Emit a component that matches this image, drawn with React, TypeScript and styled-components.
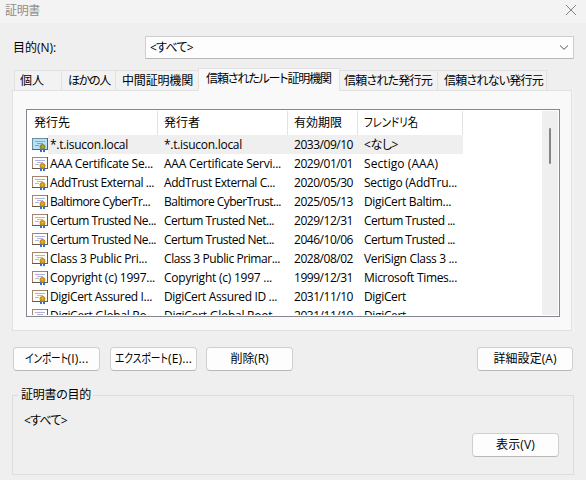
import React, { useLayoutEffect, useRef } from "react";
import styled, { createGlobalStyle } from "styled-components";

const Global = createGlobalStyle`
  * { box-sizing: border-box; }
  body { margin: 0; background: #efefef; overflow: hidden; }
`;

const Dialog = styled.main`
  width: 586px;
  height: 480px;
  overflow: hidden;
  background: #efefef;
  color: #000;
  font: 12px/18px "Open Sans", "Noto Sans CJK JP", sans-serif;
  font-feature-settings: "palt";
  white-space: nowrap;
`;

const TitleBar = styled.header`
  height: 23px;
  padding: 2px 10px 0 5px;
  display: flex;
  justify-content: space-between;
  background: #f3f3f3;
  color: #8d8d8d;
`;

const CloseIcon = styled.svg`
  width: 10px;
  height: 10px;
  margin-top: 3px;
`;

const PurposeRow = styled.section`
  display: flex;
  align-items: center;
  margin: 13px 12px 0 13px;
  height: 23px;
`;

const PurposeLabel = styled.label`
  width: 132px;
`;

const Combo = styled.div`
  display: flex;
  align-items: center;
  justify-content: space-between;
  width: 429px;
  height: 23px;
  padding: 0 5px 0 4px;
  background: #fdfdfd;
  border: 1px solid #cecece;
  border-bottom-color: #b8b8b8;
  border-radius: 1px;
`;

const Tabs = styled.nav`
  display: flex;
  align-items: flex-end;
  height: 23px;
  margin: 9px 0 -1px 14px;
`;

const Tab = styled.div<{ $width: number; $inset: number; $active?: boolean }>`
  position: relative;
  z-index: ${(p) => (p.$active ? 2 : 0)};
  flex: none;
  width: ${(p) => p.$width}px;
  height: ${(p) => (p.$active ? 23 : 21)}px;
  padding: 1px 0 0 ${(p) => p.$inset}px;
  background: ${(p) => (p.$active ? "#f9f9f9" : "#f2f2f2")};
  border: 1px solid #e1e1e1;
  border-bottom-color: ${(p) => (p.$active ? "#f9f9f9" : "#e1e1e1")};
  margin-right: -1px;
`;

const Panel = styled.section`
  width: 560px;
  height: 241px;
  margin-left: 12px;
  padding: 18px 11px 0 13px;
  background: #f9f9f9;
  border: 1px solid #e1e1e1;
  box-shadow: 2px 0 0 #f3f3f3;
`;

const ListBox = styled.div`
  display: flex;
  justify-content: space-between;
  width: 534px;
  height: 208px;
  padding: 1px;
  overflow: hidden;
  background: #fff;
  border: 1px solid #828790;
`;

const Table = styled.div`
  width: 435px;
  height: 204px;
  overflow: hidden;
`;

const TableHeader = styled.div`
  display: grid;
  grid-template-columns: 130px 130px 70px 105px;
  height: 24px;
`;

const HeaderCell = styled.div`
  padding: 3px 0 0 6px;
  border-right: 1px solid #e3e3e3;
`;

const Row = styled.div<{ $selected?: boolean }>`
  display: grid;
  grid-template-columns: 22px 114px 130px 70px 99px;
  justify-items: start;
  height: 19px;
  line-height: 20px;
  background: ${(p) => (p.$selected ? "linear-gradient(90deg, #fff 20px, #efefef 20px)" : "#fff")};
`;

const IconCell = styled.div`
  padding: 1px 0 0 4px;
  line-height: 0;
`;

const ScrollTrack = styled.div`
  width: 16px;
  padding: 17px 0 0 7px;
  background: #efefef;
`;

const Thumb = styled.div`
  width: 2px;
  height: 36px;
  background: #858585;
  border-radius: 1px;
`;

const Actions = styled.section`
  display: grid;
  grid-template-columns: 97px 96px 1fr 96px;
  margin: 16px 13px 0 13px;
`;

const Button = styled.button<{ $width?: number }>`
  display: flex;
  align-items: center;
  justify-content: center;
  width: ${(p) => p.$width ?? 87}px;
  height: 24px;
  padding: 0;
  color: #000;
  font: inherit;
  font-feature-settings: inherit;
  background: #fdfdfd;
  border: 1px solid #d0d0d0;
  border-bottom-color: #b9b9b9;
  border-radius: 4px;
`;

const Group = styled.fieldset`
  display: flex;
  width: 562px;
  height: 89px;
  margin: 15px 0 0 12px;
  padding: 8px 14px 0 11px;
  min-width: 0;
  border: 1px solid #dcdcdc;
`;

const Legend = styled.legend`
  width: 75px;
  margin-left: -6px;
  padding: 0 0 0 3px;
`;

const GroupBody = styled.div`
  display: flex;
  width: 100%;
  justify-content: space-between;
`;

const ViewButton = styled(Button)`
  margin-top: 21px;
`;

const Run = styled.span`
  display: inline-block;
  white-space: pre;
  transform-origin: left center;
`;

/**
 * One line of text that spans a given width, either by its tracking or,
 * when condensed, by narrowing the letters themselves.
 */
function Label({ text, width, condensed }: { text: string; width: number; condensed?: boolean }) {
  const ref = useRef<HTMLSpanElement>(null);
  useLayoutEffect(() => {
    const el = ref.current;
    if (!el) return;
    el.style.letterSpacing = "0";
    const natural = el.getBoundingClientRect().width;
    if (condensed) {
      el.style.transform = `scaleX(${width / natural})`;
      el.style.marginRight = `${width - natural}px`;
    } else {
      el.style.letterSpacing = `${(width - natural) / text.length}px`;
    }
    return () => {
      el.style.transform = "";
      el.style.marginRight = "";
    };
  }, [text, width, condensed]);
  return <Run ref={ref}>{text}</Run>;
}

function CertificateIcon({ selected }: { selected?: boolean }) {
  return (
    <svg width="16" height="17" viewBox="0 0 16 17" shapeRendering="crispEdges">
      <rect x="0.5" y="2.5" width="15" height="11" fill={selected ? "#b9e0f5" : "#fffdfa"} stroke={selected ? "#6b8da0" : "#a08670"} />
      <path d="M15.5 2v12M0 13.5h16" stroke={selected ? "#4d6572" : "#6d573f"} />
      <path d="M3 5.5h10" stroke={selected ? "#7db0db" : "#b1b0da"} />
      <path d="M5 7.5h6M3 9.5h4" stroke={selected ? "#76a5d4" : "#b5b5dd"} />
      <g shapeRendering="auto">
        <path d="M8 12.5h2v3.7l-1-.4-1 .4zM11 12.5h2v3.7l-1-.4-1 .4z" fill="#2b6bd3" />
        <circle cx="10.5" cy="10.9" r="2.6" fill={selected ? "#97913b" : "#d39a17"} stroke={selected ? "#757a34" : "#aa7716"} strokeWidth=".6" />
        <circle cx="10.5" cy="10.8" r="1" fill={selected ? "#b6a544" : "#ebb624"} />
      </g>
    </svg>
  );
}

type Cell = [string, number];

const tabs = [
  { text: "個人", width: 48, inset: 5, span: 24 },
  { text: "ほかの人", width: 55, inset: 6, span: 42 },
  { text: "中間証明機関", width: 84, inset: 6, span: 71 },
  { text: "信頼されたルート証明機関", width: 142, inset: 7, span: 125, active: true },
  { text: "信頼された発行元", width: 99, inset: 4, span: 88 },
  { text: "信頼されない発行元", width: 110, inset: 6, span: 99 },
];

const rows: Cell[][] = [
  [["*.t.isucon.local", 78], ["*.t.isucon.local", 78], ["2033/09/10", 59], ["<なし>", 34]],
  [["AAA Certificate Se...", 103], ["AAA Certificate Servi...", 117], ["2029/01/01", 59], ["Sectigo (AAA)", 74]],
  [["AddTrust External ...", 104], ["AddTrust External C...", 111], ["2020/05/30", 59], ["Sectigo (AddTru...", 93]],
  [["Baltimore CyberTr...", 100], ["Baltimore CyberTrust...", 117], ["2025/05/13", 59], ["DigiCert Baltim...", 87]],
  [["Certum Trusted Ne...", 106], ["Certum Trusted Net...", 110], ["2029/12/31", 59], ["Certum Trusted ...", 91]],
  [["Certum Trusted Ne...", 106], ["Certum Trusted Net...", 110], ["2046/10/06", 59], ["Certum Trusted ...", 91]],
  [["Class 3 Public Pri...", 97], ["Class 3 Public Primar...", 116], ["2028/08/02", 59], ["VeriSign Class 3 ...", 93]],
  [["Copyright (c) 1997...", 105], ["Copyright (c) 1997 ...", 108], ["1999/12/31", 59], ["Microsoft Times...", 93]],
  [["DigiCert Assured I...", 102], ["DigiCert Assured ID ...", 113], ["2031/11/10", 59], ["DigiCert", 42]],
  [["DigiCert Global Ro...", 105], ["DigiCert Global Root...", 117], ["2031/11/10", 59], ["DigiCert", 42]],
];

export default function App() {
  return (
    <Dialog>
      <Global />
      <TitleBar>
        <Label text="証明書" width={35} />
        <CloseIcon viewBox="0 0 10 10">
          <path d="M0 0l10 10M10 0L0 10" stroke="#858585" fill="none" />
        </CloseIcon>
      </TitleBar>
      <PurposeRow>
        <PurposeLabel><Label text="目的(N):" width={43} /></PurposeLabel>
        <Combo>
          <Label text="<すべて>" width={43} />
          <svg width="8" height="5" viewBox="0 0 8 5">
            <path d="M0 .5l4 3.8L8 .5" stroke="#555" fill="none" />
          </svg>
        </Combo>
      </PurposeRow>
      <Tabs>
        {tabs.map((t) => (
          <Tab key={t.text} $width={t.width} $inset={t.inset} $active={t.active}>
            <Label text={t.text} width={t.span} />
          </Tab>
        ))}
      </Tabs>
      <Panel>
        <ListBox>
          <Table>
            <TableHeader>
              <HeaderCell><Label text="発行先" width={36} /></HeaderCell>
              <HeaderCell><Label text="発行者" width={36} /></HeaderCell>
              <HeaderCell><Label text="有効期限" width={48} /></HeaderCell>
              <HeaderCell><Label text="フレンドリ名" width={54} condensed /></HeaderCell>
            </TableHeader>
            {rows.map((cells, i) => (
              <Row key={i} $selected={i === 0}>
                <IconCell><CertificateIcon selected={i === 0} /></IconCell>
                {cells.map(([text, width], c) => (
                  <Label key={c} text={text} width={width} />
                ))}
              </Row>
            ))}
          </Table>
          <ScrollTrack><Thumb /></ScrollTrack>
        </ListBox>
      </Panel>
      <Actions>
        <Button>
          <Label text="インポート" width={43} condensed />
          <Label text="(I)..." width={21} />
        </Button>
        <Button>
          <Label text="エクスポート" width={53} condensed />
          <Label text="(E)..." width={24} />
        </Button>
        <Button><Label text="削除(R)" width={38} /></Button>
        <Button $width={96}><Label text="詳細設定(A)" width={63} /></Button>
      </Actions>
      <Group>
        <Legend><Label text="証明書の目的" width={70} /></Legend>
        <GroupBody>
          <Label text="<すべて>" width={43} />
          <ViewButton><Label text="表示(V)" width={39} /></ViewButton>
        </GroupBody>
      </Group>
    </Dialog>
  );
}
